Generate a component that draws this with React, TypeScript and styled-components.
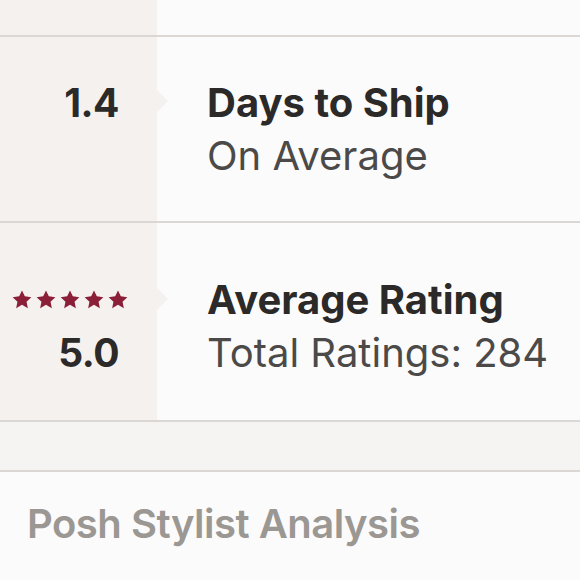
import React from 'react'
import styled, { createGlobalStyle } from 'styled-components'

const GlobalStyle = createGlobalStyle`
  html, body {
    margin: 0;
    padding: 0;
    background: #fcfbfb;
    font-family: Inter, "Liberation Sans", sans-serif;
  }
`

const Page = styled.div`
  width: 580px;
  height: 580px;
  overflow: hidden;
  display: flex;
  flex-direction: column;
  background: #fcfbfb;
`

const Row = styled.div<{ $height: number; $shift?: number }>`
  display: grid;
  grid-template-columns: 157px 1fr;
  height: ${(p) => p.$height}px;
  border-bottom: 2px solid #dbd7d5;
  box-sizing: border-box;

  & > * {
    padding-top: ${(p) => p.$shift ?? 0}px;
  }
`

const Left = styled.div`
  position: relative;
  background: #f4f1ef;
  display: flex;
  flex-direction: column;
  align-items: flex-end;
  justify-content: center;
  padding-right: 38px;
`

const Pointer = styled.span<{ $top: number }>`
  position: absolute;
  right: -11px;
  top: ${(p) => p.$top}px;
  width: 0;
  height: 0;
  border-top: 11px solid transparent;
  border-bottom: 11px solid transparent;
  border-left: 11px solid #f4f1ef;
`

const Line = styled.div`
  height: 53px;
  display: flex;
  align-items: center;
  white-space: nowrap;
`

const Value = styled(Line)`
  font-size: 39px;
  font-weight: 700;
  color: #2b2a29;
  letter-spacing: -0.5px;
`

const Stars = styled(Line)`
  gap: 4px;
  margin-right: -9px;
`

const Right = styled.div`
  display: flex;
  flex-direction: column;
  justify-content: center;
  padding-left: 50px;
`

const Title = styled(Line)`
  font-size: 40px;
  font-weight: 700;
  color: #2b2a29;
`

const Sub = styled(Line)`
  font-size: 40px;
  font-weight: 400;
  color: #4b4a49;
`

const Band = styled.div`
  height: 50px;
  background: #f5f4f2;
  border-bottom: 2px solid #dbd7d5;
  box-sizing: border-box;
`

const Heading = styled.div`
  padding: 27px 0 0 27px;
  font-size: 40px;
  font-weight: 600;
  color: #9b9793;
  letter-spacing: -0.5px;
  white-space: nowrap;
`

const Star = () => (
  <svg width="20" height="19" viewBox="0 0 24 23">
    <path
      d="M12 0.5l3.4 7.2 7.9 1-5.8 5.4 1.6 7.9L12 18l-7.1 4 1.6-7.9L0.7 8.7l7.9-1z"
      fill="#8a1f37"
    />
  </svg>
)

export default function App() {
  return (
    <Page>
      <GlobalStyle />
      <Row $height={37}>
        <Left />
        <div />
      </Row>
      <Row $height={186}>
        <Left>
          <Pointer $top={53} />
          <Value>1.4</Value>
          <Line />
        </Left>
        <Right>
          <Title>Days to Ship</Title>
          <Sub>On Average</Sub>
        </Right>
      </Row>
      <Row $height={199} $shift={8}>
        <Left>
          <Pointer $top={65} />
          <Stars>
            {[0, 1, 2, 3, 4].map((i) => (
              <Star key={i} />
            ))}
          </Stars>
          <Value>5.0</Value>
        </Left>
        <Right>
          <Title>Average Rating</Title>
          <Sub>Total Ratings: 284</Sub>
        </Right>
      </Row>
      <Band />
      <Heading>Posh Stylist Analysis</Heading>
    </Page>
  )
}
